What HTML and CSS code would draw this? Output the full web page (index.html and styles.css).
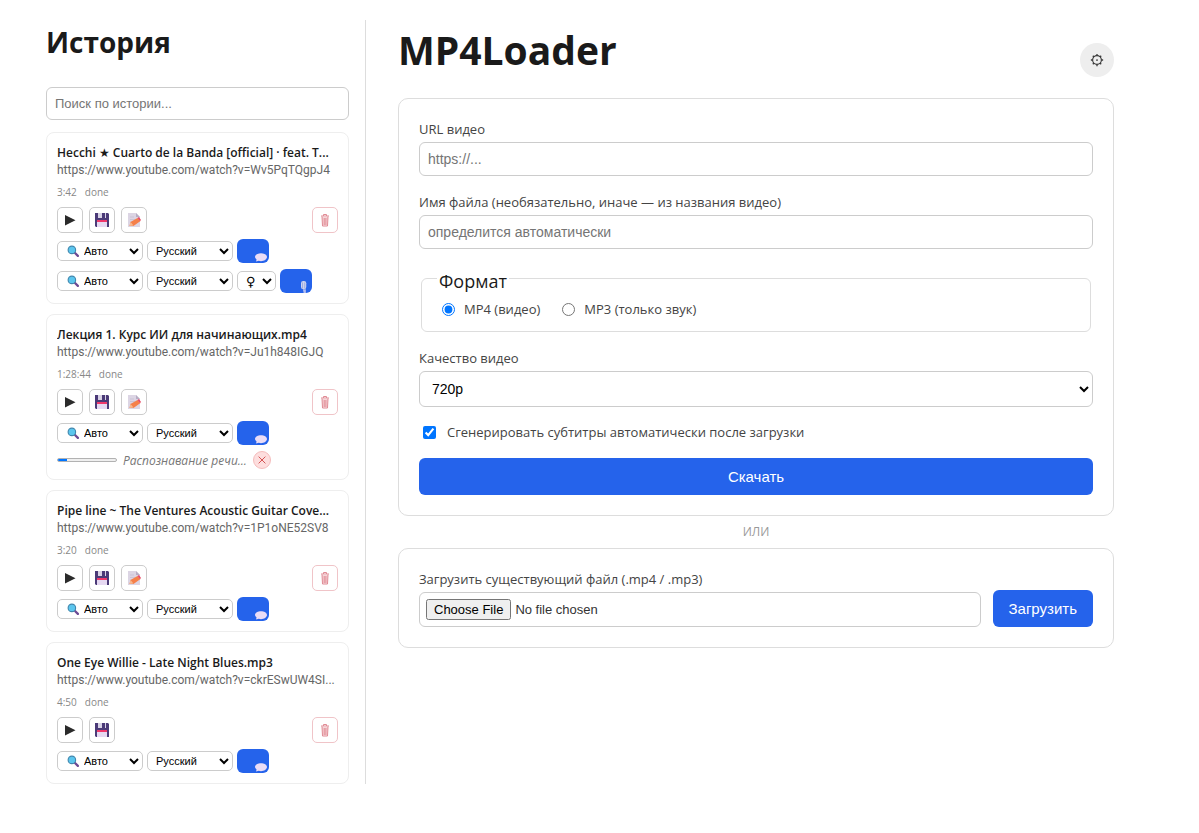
FILE: index.html
```
<!DOCTYPE html>
<html lang="ru">

<head>
    <meta charset="UTF-8">
    <meta name="viewport" content="width=device-width, initial-scale=1.0">
    <title>MP4Loader</title>
    <link rel="stylesheet" href="styles.css">
</head>

<body>
    <svg class="sprite" aria-hidden="true">
        <symbol id="i-play" viewBox="0 0 16 16">
            <path d="M3 3v10.500L13.500 8.200z" fill="#2b2b2b" />
        </symbol>
        <symbol id="i-save" viewBox="0 0 16 16">
            <path d="M1 1h13l1 1v13H2l-1-1z" fill="#4b3a78" />
            <path d="M4 1h8v5H4z" fill="#d9d3e6" />
            <path d="M8 1h3v5H8z" fill="#4b3a78" />
            <path d="M3 8h10v7H3z" fill="#e6d9f2" />
            <path d="M3 8h10v2H3z" fill="#f0386b" />
        </symbol>
        <symbol id="i-note" viewBox="0 0 16 16">
            <path d="M2 1h8l4 4v10H2z" fill="#dcd5e4" />
            <path d="M10 1v4h4z" fill="#b7adc4" />
            <path d="M4 5h4M4 7.500h5M4 10h3" stroke="#cbc3d6" />
            <path d="M3.500 14l1-4 7-4 3 3-7 5z" fill="#f5804a" />
            <path d="M11.500 6l1.500-1 2 3-1 1z" fill="#e8486a" />
            <path d="M3.500 14l1-4 3 3.500z" fill="#f6b890" />
        </symbol>
        <symbol id="i-trash" viewBox="0 0 16 16">
            <path d="M5 5h6l-.500 8.500h-5z" fill="#f6d5d8" />
            <path d="M4 4h8M6.500 4V2.500h3V4M5 4.500l.500 9.500h5l.500-9.500M7.200 6v7M8.900 6v7" fill="none" stroke="#e08a94" />
        </symbol>
        <symbol id="i-search" viewBox="0 0 16 16">
            <path d="M10 10l4.500 4.500" stroke="#6d4a94" stroke-width="3" stroke-linecap="round" />
            <circle cx="6.500" cy="6.500" r="5" fill="#5cc6ee" stroke="#3f86ad" stroke-width="1.500" />
        </symbol>
        <symbol id="i-bubble" viewBox="0 0 16 16">
            <path d="M8 3c4 0 8 2 8 5s-4 5.500-8 5.500c-1 0-2 0-3-.500L1.500 14l.500-3C1 10 0 9 0 8c0-3 4-5 8-5z" fill="#eadcf6" />
        </symbol>
        <symbol id="i-mic" viewBox="0 0 16 16">
            <rect x="4" y="0" width="7" height="11" rx="3" fill="#cdd3ee" />
            <path d="M6 2v8M9 2v8" stroke="#8f9fdc" />
            <path d="M6.500 11h4v5h-3z" fill="#b3bdf0" />
        </symbol>
        <symbol id="i-gear" viewBox="0 0 16 16">
            <circle cx="8" cy="8" r="5" fill="none" stroke="#3a3a3a" stroke-width="1.300" />
            <circle cx="8" cy="8" r="1" fill="#3a3a3a" />
            <path d="M8 1v2M8 13v2M1 8h2M13 8h2M3.200 3.200l1.400 1.400M11.400 11.400l1.400 1.400M3.200 12.800l1.400-1.400M11.400 4.600l1.400-1.400" stroke="#3a3a3a" stroke-width="1.500" />
        </symbol>
        <symbol id="i-cross" viewBox="0 0 16 16">
            <path d="M3.500 3.500l9 9M12.500 3.500l-9 9" stroke="#cf4444" stroke-width="1.200" />
        </symbol>
    </svg>

    <div class="layout">
        <aside class="sidebar">
            <h2>История</h2>
            <input class="search" type="search" placeholder="Поиск по истории..." aria-label="Поиск по истории">

            <ul class="history">
                <li class="item">
                    <div class="item-title">Hecchi ★ Cuarto de la Banda [official] · feat. T...</div>
                    <div class="item-url">https://www.youtube.com/watch?v=Wv5PqTQgpJ4</div>
                    <div class="item-meta"><span>3:42</span><span>done</span></div>
                    <div class="actions">
                        <button class="icon-btn" aria-label="Воспроизвести"><svg><use href="#i-play" /></svg></button>
                        <button class="icon-btn" aria-label="Сохранить"><svg><use href="#i-save" /></svg></button>
                        <button class="icon-btn" aria-label="Субтитры"><svg><use href="#i-note" /></svg></button>
                        <button class="icon-btn delete" aria-label="Удалить"><svg><use href="#i-trash" /></svg></button>
                    </div>
                    <div class="row">
                        <span class="from"><svg><use href="#i-search" /></svg><select aria-label="Язык видео"><option>Авто</option></select></span>
                        <select aria-label="Язык субтитров"><option>Русский</option></select>
                        <button class="run-btn" aria-label="Создать субтитры"><svg><use href="#i-bubble" /></svg></button>
                    </div>
                    <div class="row">
                        <span class="from"><svg><use href="#i-search" /></svg><select aria-label="Язык видео"><option>Авто</option></select></span>
                        <select aria-label="Язык озвучки"><option>Русский</option></select>
                        <select class="voice" aria-label="Голос"><option>♀</option></select>
                        <button class="run-btn" aria-label="Озвучить"><svg><use href="#i-mic" /></svg></button>
                    </div>
                </li>

                <li class="item">
                    <div class="item-title">Лекция 1. Курс ИИ для начинающих.mp4</div>
                    <div class="item-url">https://www.youtube.com/watch?v=Ju1h848IGJQ</div>
                    <div class="item-meta"><span>1:28:44</span><span>done</span></div>
                    <div class="actions">
                        <button class="icon-btn" aria-label="Воспроизвести"><svg><use href="#i-play" /></svg></button>
                        <button class="icon-btn" aria-label="Сохранить"><svg><use href="#i-save" /></svg></button>
                        <button class="icon-btn" aria-label="Субтитры"><svg><use href="#i-note" /></svg></button>
                        <button class="icon-btn delete" aria-label="Удалить"><svg><use href="#i-trash" /></svg></button>
                    </div>
                    <div class="row">
                        <span class="from"><svg><use href="#i-search" /></svg><select aria-label="Язык видео"><option>Авто</option></select></span>
                        <select aria-label="Язык субтитров"><option>Русский</option></select>
                        <button class="run-btn" aria-label="Создать субтитры"><svg><use href="#i-bubble" /></svg></button>
                    </div>
                    <div class="job">
                        <progress value="15" max="100" aria-label="Ход распознавания"></progress>
                        <span class="job-text">Распознавание речи...</span>
                        <button class="cancel" aria-label="Отменить"><svg><use href="#i-cross" /></svg></button>
                    </div>
                </li>

                <li class="item">
                    <div class="item-title">Pipe line ~ The Ventures Acoustic Guitar Cove...</div>
                    <div class="item-url">https://www.youtube.com/watch?v=1P1oNE52SV8</div>
                    <div class="item-meta"><span>3:20</span><span>done</span></div>
                    <div class="actions">
                        <button class="icon-btn" aria-label="Воспроизвести"><svg><use href="#i-play" /></svg></button>
                        <button class="icon-btn" aria-label="Сохранить"><svg><use href="#i-save" /></svg></button>
                        <button class="icon-btn" aria-label="Субтитры"><svg><use href="#i-note" /></svg></button>
                        <button class="icon-btn delete" aria-label="Удалить"><svg><use href="#i-trash" /></svg></button>
                    </div>
                    <div class="row">
                        <span class="from"><svg><use href="#i-search" /></svg><select aria-label="Язык видео"><option>Авто</option></select></span>
                        <select aria-label="Язык субтитров"><option>Русский</option></select>
                        <button class="run-btn" aria-label="Создать субтитры"><svg><use href="#i-bubble" /></svg></button>
                    </div>
                </li>

                <li class="item">
                    <div class="item-title">One Eye Willie - Late Night Blues.mp3</div>
                    <div class="item-url">https://www.youtube.com/watch?v=ckrESwUW4SI...</div>
                    <div class="item-meta"><span>4:50</span><span>done</span></div>
                    <div class="actions">
                        <button class="icon-btn" aria-label="Воспроизвести"><svg><use href="#i-play" /></svg></button>
                        <button class="icon-btn" aria-label="Сохранить"><svg><use href="#i-save" /></svg></button>
                        <button class="icon-btn delete" aria-label="Удалить"><svg><use href="#i-trash" /></svg></button>
                    </div>
                    <div class="row">
                        <span class="from"><svg><use href="#i-search" /></svg><select aria-label="Язык видео"><option>Авто</option></select></span>
                        <select aria-label="Язык субтитров"><option>Русский</option></select>
                        <button class="run-btn" aria-label="Создать субтитры"><svg><use href="#i-bubble" /></svg></button>
                    </div>
                </li>
            </ul>
        </aside>

        <main>
            <header class="top">
                <h1>MP4Loader</h1>
                <button class="settings" aria-label="Настройки"><svg><use href="#i-gear" /></svg></button>
            </header>

            <form class="card">
                <div class="field">
                    <label for="url">URL видео</label>
                    <input id="url" type="text" placeholder="https://...">
                </div>
                <div class="field">
                    <label for="filename">Имя файла (необязательно, иначе — из названия видео)</label>
                    <input id="filename" type="text" placeholder="определится автоматически">
                </div>
                <fieldset>
                    <legend>Формат</legend>
                    <div class="formats">
                        <label class="check"><input type="radio" name="format" checked>MP4 (видео)</label>
                        <label class="check"><input type="radio" name="format">MP3 (только звук)</label>
                    </div>
                </fieldset>
                <div class="field">
                    <label for="quality">Качество видео</label>
                    <select id="quality">
                        <option>720p</option>
                    </select>
                </div>
                <label class="check subs"><input type="checkbox" checked>Сгенерировать субтитры автоматически после загрузки</label>
                <button class="primary" type="button">Скачать</button>
            </form>

            <div class="or">ИЛИ</div>

            <form class="card upload">
                <div class="field">
                    <label for="file">Загрузить существующий файл (.mp4 / .mp3)</label>
                    <input id="file" type="file">
                </div>
                <button class="primary" type="button">Загрузить</button>
            </form>
        </main>
    </div>
</body>

</html>
```
FILE: styles.css
```
* {
    box-sizing: border-box;
}

body {
    margin: 0;
    font-family: "Segoe UI", "Open Sans", "DejaVu Sans", sans-serif;
    font-size: 16px;
    color: #1a1a1a;
    background: #fff;
}

input,
select,
button {
    font-family: Arial, "Liberation Sans", "DejaVu Sans", sans-serif;
    margin: 0;
}

button {
    cursor: pointer;
}

svg {
    width: 16px;
    height: 16px;
    display: block;
}

.sprite {
    display: none;
}

.layout {
    display: grid;
    grid-template-columns: 320px minmax(0, 1fr);
    gap: 32px;
    align-items: start;
    padding: 20px 85px 48px 46px;
}

/* history */

.sidebar {
    border-right: 1px solid #ddd;
    padding-right: 16px;
}

h2 {
    margin: 0 0 23px;
    font-size: 28px;
    line-height: 44px;
}

.search {
    display: block;
    width: 100%;
    height: 33px;
    padding: 0 8px;
    font-size: 13px;
    border: 1px solid #ccc;
    border-radius: 6px;
}

.history {
    list-style: none;
    margin: 12px 0 0;
    padding: 0;
    display: flex;
    flex-direction: column;
    gap: 10px;
}

.item {
    padding: 10px;
    border: 1px solid #eee;
    border-radius: 8px;
}

.item-title,
.item-url {
    overflow: hidden;
    white-space: nowrap;
    text-overflow: ellipsis;
}

.item-title {
    font-size: 12px;
    font-weight: 600;
    line-height: 19px;
}

.item-url {
    font-family: Roboto, "Open Sans", sans-serif;
    font-size: 12px;
    line-height: 17px;
    color: #666;
}

.item-meta {
    display: flex;
    gap: 8px;
    margin-top: 4px;
    font-size: 10px;
    line-height: 18px;
    color: #888;
}

.actions {
    display: flex;
    gap: 6px;
    margin-top: 6px;
}

.icon-btn {
    display: flex;
    align-items: center;
    justify-content: center;
    width: 26px;
    height: 26px;
    padding: 0;
    background: #fff;
    border: 1px solid #ccc;
    border-radius: 5px;
}

.delete {
    margin-left: auto;
    border-color: #f0c4c8;
}

.row {
    display: flex;
    align-items: center;
    gap: 4px;
    margin-top: 6px;
}

.row select {
    width: 86px;
    height: 20px;
    padding: 0 4px;
    font-size: 11px;
    color: #000;
    background: #fff;
    border: 1px solid #ccc;
    border-radius: 5px;
}

.from {
    position: relative;
    display: flex;
}

.row .from select {
    padding-left: 22px;
}

.from svg {
    position: absolute;
    left: 10px;
    top: 4px;
    width: 12px;
    height: 12px;
    pointer-events: none;
}

.row .voice {
    width: 39px;
    font-family: "DejaVu Sans", sans-serif;
    font-size: 13px;
}

.run-btn {
    display: flex;
    align-items: flex-end;
    justify-content: flex-end;
    width: 32px;
    height: 24px;
    padding: 0 2px 0 0;
    background: #2563eb;
    border: 0;
    border-radius: 6px;
}

.run-btn svg {
    width: 12px;
    height: 12px;
}

.job {
    display: flex;
    align-items: center;
    gap: 6px;
    margin-top: 6px;
    height: 18px;
}

progress {
    appearance: none;
    width: 60px;
    height: 4px;
    border: 0;
}

progress::-webkit-progress-bar {
    background: #efefef;
    border: 1px solid #b2b2b2;
    border-radius: 2px;
}

progress::-webkit-progress-value {
    background: #0075ff;
    border-radius: 2px 0 0 2px;
}

.job-text {
    font-size: 12px;
    font-style: italic;
    color: #777;
}

.cancel {
    display: flex;
    align-items: center;
    justify-content: center;
    width: 18px;
    height: 18px;
    padding: 0;
    background: #fddede;
    border: 1px solid #f5bcbc;
    border-radius: 50%;
}

.cancel svg {
    width: 12px;
    height: 12px;
    flex: none;
}

/* main */

.top {
    display: flex;
    justify-content: space-between;
    align-items: flex-start;
    height: 78px;
}

h1 {
    margin: 0;
    font-size: 39px;
    line-height: 59px;
}

.settings {
    display: flex;
    align-items: center;
    justify-content: center;
    width: 34px;
    height: 34px;
    margin-top: 23px;
    padding: 0;
    background: #eee;
    border: 0;
    border-radius: 50%;
}

.settings svg {
    width: 14px;
    height: 14px;
}

.card {
    display: flex;
    flex-direction: column;
    gap: 16px;
    padding: 20px;
    border: 1px solid #ddd;
    border-radius: 10px;
}

.field {
    display: flex;
    flex-direction: column;
    gap: 2px;
}

label {
    font-size: 13px;
    line-height: 21px;
    color: #444;
}

.field input,
.field select {
    width: 100%;
    height: 34px;
    padding: 0 8px;
    font-size: 14px;
    color: #000;
    background: #fff;
    border: 1px solid #ccc;
    border-radius: 6px;
}

.field select {
    height: 36px;
}

fieldset {
    margin: 0 2px;
    padding: 8px 20px 11px;
    border: 1px solid #ddd;
    border-radius: 6px;
}

legend {
    margin-left: -5px;
    padding: 6px 2px 0;
    font-size: 18px;
    line-height: 20px;
}

.formats {
    display: flex;
    gap: 22px;
}

.check {
    display: flex;
    align-items: center;
    gap: 9px;
}

.check input {
    width: 13px;
    height: 13px;
}

.subs {
    padding-left: 4px;
    gap: 11px;
    line-height: 19px;
}

.primary {
    height: 37px;
    padding: 0 16px;
    font-size: 15px;
    color: #fff;
    background: #2563eb;
    border: 0;
    border-radius: 6px;
}

.or {
    font-size: 12px;
    line-height: 32px;
    text-align: center;
    color: #999;
}

.upload {
    flex-direction: row;
    align-items: flex-end;
    gap: 12px;
}

.upload .field {
    flex: 1;
}

.field input[type="file"] {
    height: 35px;
    padding: 6px;
    font-size: 13px;
    color: #333;
}
```
